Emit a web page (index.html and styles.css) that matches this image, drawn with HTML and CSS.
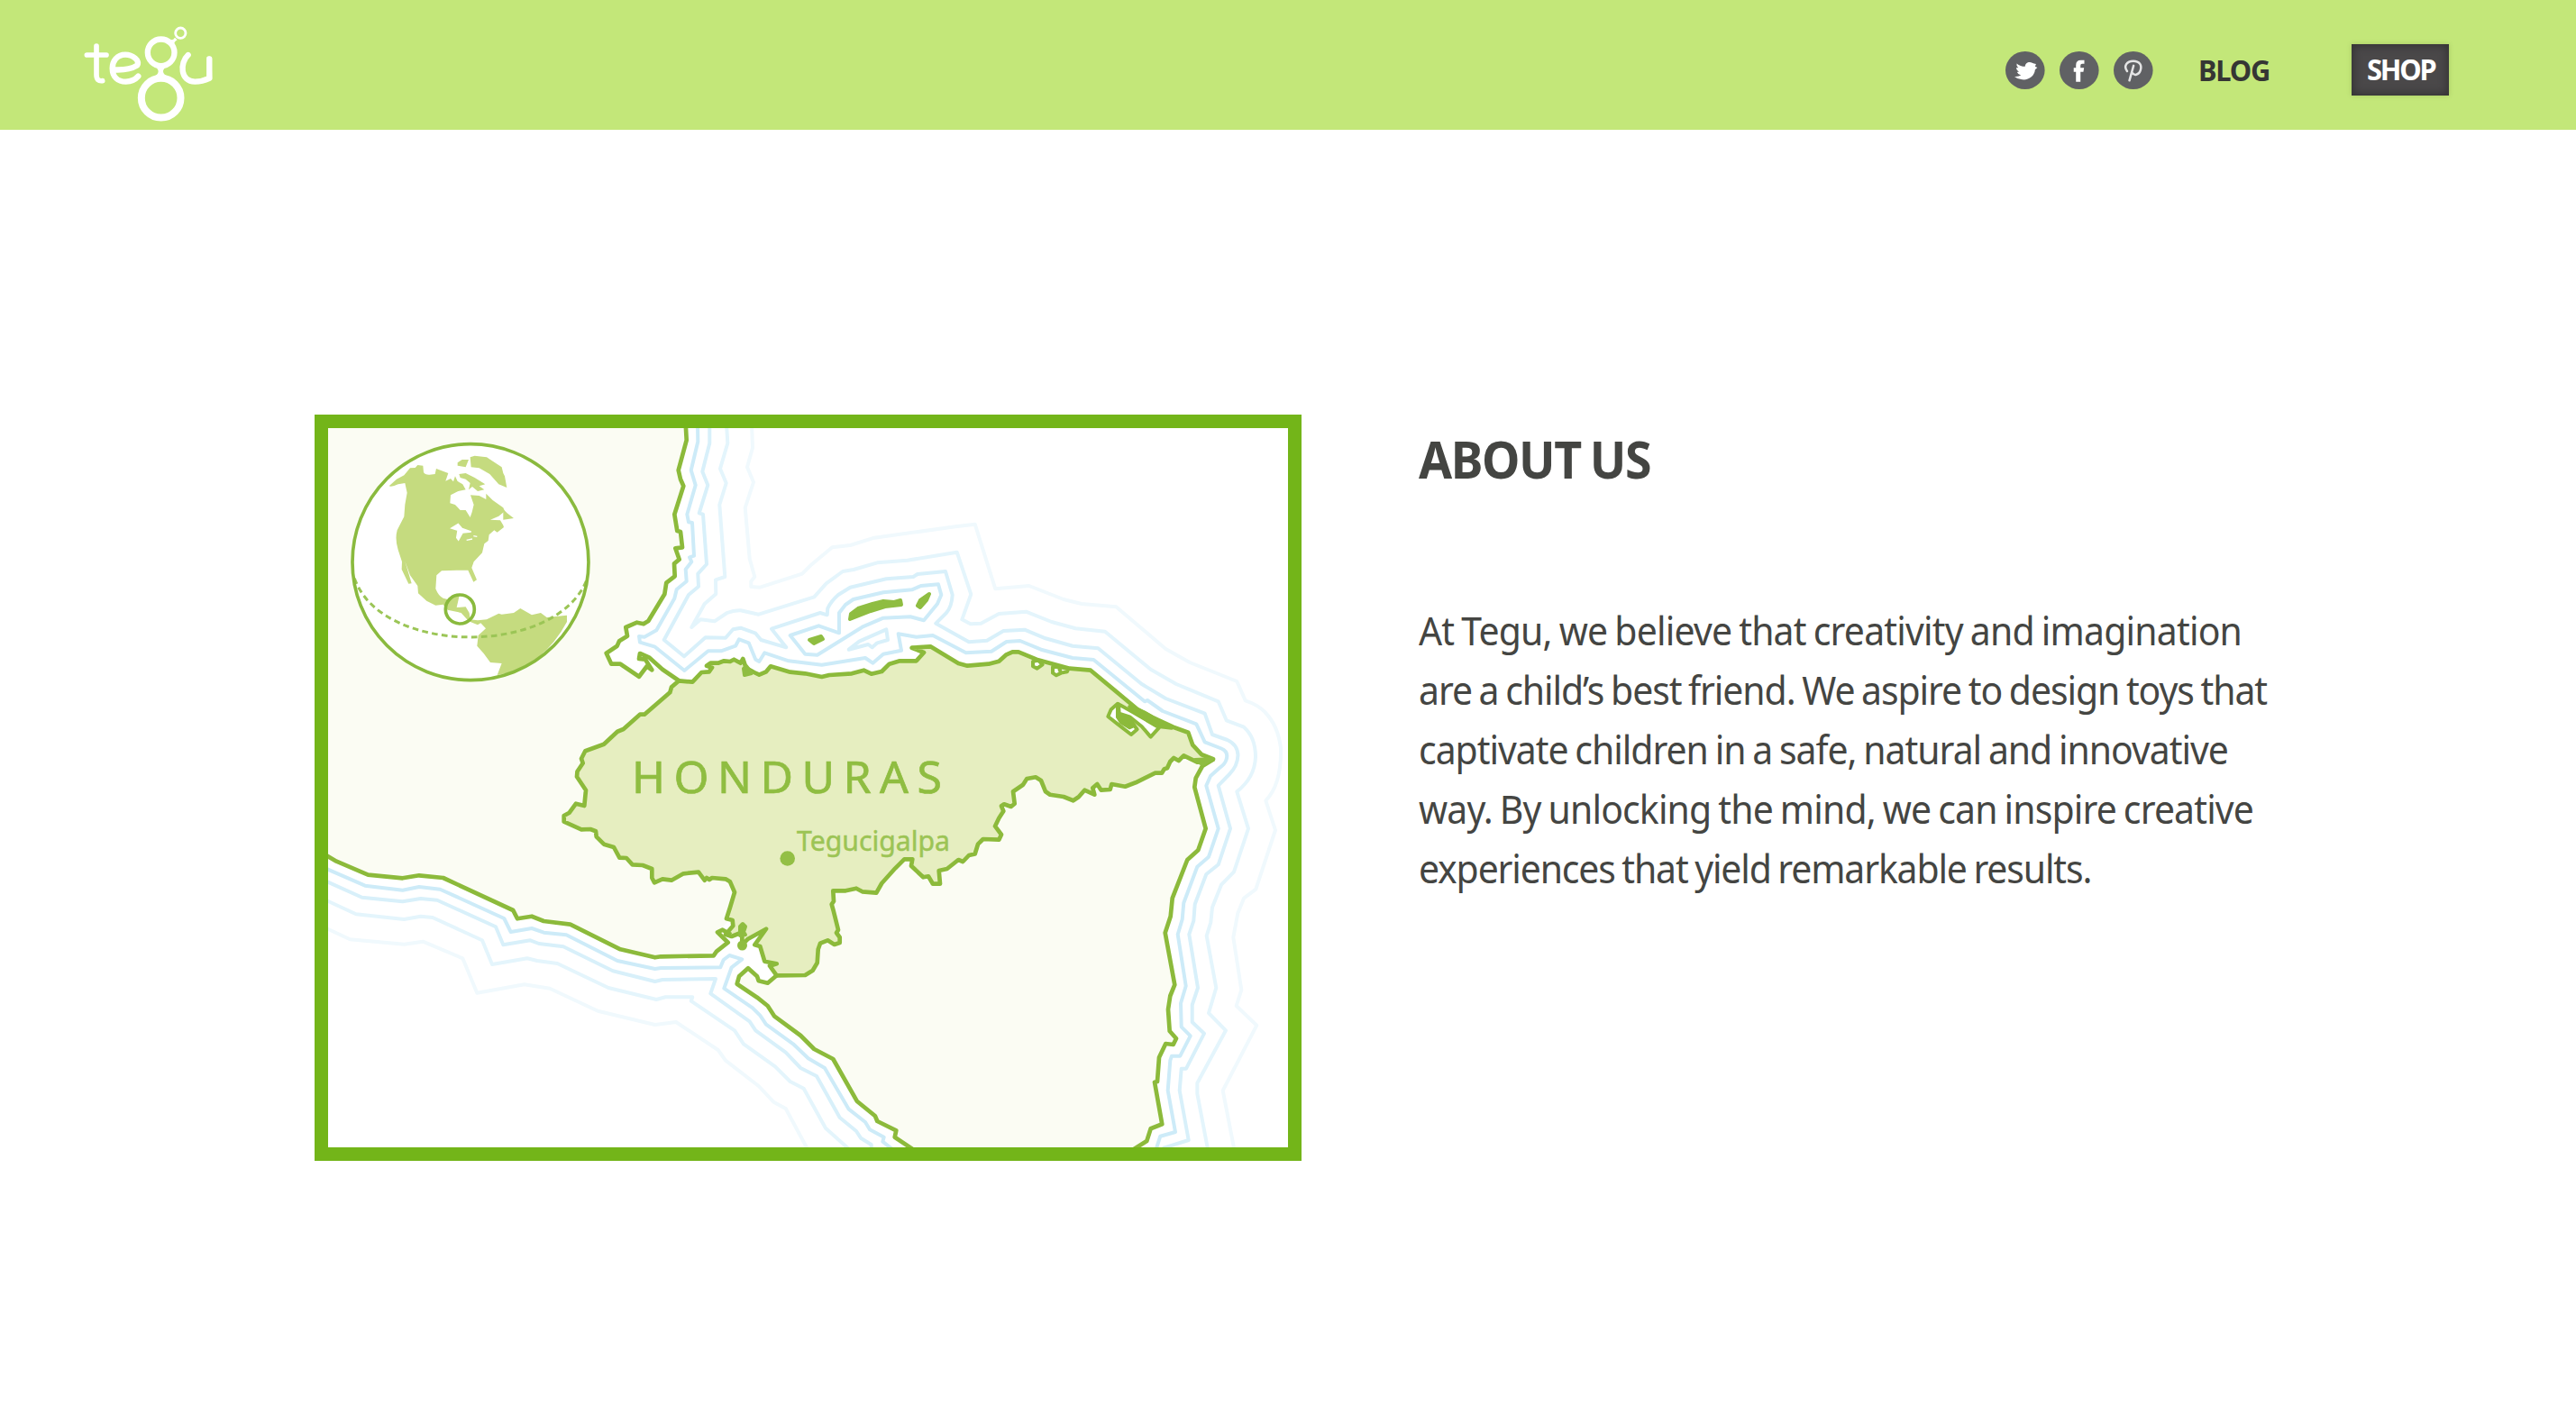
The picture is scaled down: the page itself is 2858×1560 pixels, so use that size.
FILE: index.html
```
<!DOCTYPE html>
<html lang="en">
<head>
<meta charset="utf-8">
<title>Tegu – About Us</title>
<link rel="stylesheet" href="styles.css">
</head>
<body>
<header class="topbar">
  <a class="logo" href="#" aria-label="tegu">
    <svg class="logo-mark" viewBox="100 85 435 325">
      <g class="logo-letters">
        <path d="M142 154V250Q142 273 162 270M110 184H175"/>
        <path d="M198 233Q250 236 277 219C289 203 262 183 238 183C210 183 195 205 195 228C195 257 213 273 240 273Q266 272 281 255"/>
        <path d="M447 184C419 210 420 273 470 273C492 273 505 268 518 262V197"/>
      </g>
      <path class="logo-fill" d="M338 222Q348 232 348 238Q348 247 336 255H377Q364 247 364 238Q364 232 374 222ZM383 132Q397 137 403 126L411 134Q401 139 401 147Z"/>
      <path class="logo-fill" d="M510 190Q520 186 525 193L527 266L510 272Z"/>
      <circle class="logo-ring" cx="357" cy="176" r="44.500"/>
      <circle class="logo-ring big" cx="357" cy="327" r="65.500"/>
      <circle class="logo-ring small" cx="422" cy="111" r="17"/>
    </svg>
  </a>
  <nav class="nav">
    <div class="social">
      <a href="#" aria-label="Twitter"><svg viewBox="70 110 122 122" preserveAspectRatio="none"><circle cx="131" cy="171" r="61"/><path class="glyph" d="M105 149Q116 159 131 159C131 147 143 142 153 147Q158 149 165 151L162 159L169 162L162 169C160 190 143 203 122 201Q108 200 98 191Q111 192 118 187Q108 183 106 177L112 175Q103 170 104 162L110 163Q103 157 105 149Z"/></svg></a>
      <a href="#" aria-label="Facebook"><svg viewBox="238 110 122 122" preserveAspectRatio="none"><circle cx="299" cy="171" r="61"/><path class="glyph" d="M289 208V176H282V163H289V154Q289 138 304 138H315V150H308Q303 150 303 156V163H314L312 176H303V208Z"/></svg></a>
      <a href="#" aria-label="Pinterest"><svg viewBox="406 110 122 122" preserveAspectRatio="none"><circle cx="467" cy="171" r="61"/><path class="outline" d="M448 174C436 157 447 141 467 141C487 141 495 155 489 172C484 187 469 189 464 179M468 156L455 204"/></svg></a>
    </div>
    <a class="blog" href="#"><span>BLOG</span></a>
    <a class="shop" href="#"><span>SHOP</span></a>
  </nav>
</header>

<main class="about">
  <figure class="map">
    <svg viewBox="364 475 1065 798">
      <!-- neighbouring land -->
      <g class="land">
        <path d="M364 470H760.700L761.700 488.300 752.700 521.700 755 531.700 758.300 539.300 748.300 570.700 751.300 589 755 590 757 607.300 749.300 608.300 753.700 620.700 748 625.300 748.700 639.300 739.300 646.700 737.300 659.300 719.300 689 714 692.300 706.700 690.700 694.300 696 696 705.700 687 711.300 684.700 716.700 672.700 724.700 678.300 736.700 688.300 736.700 709 750.700 717.700 739.300 735 742.700 753.300 755.300 753 950H364Z"/>
        <path d="M364 950.700L373.300 955.700 408.300 970.700 446.700 974.300 465 971.300 491.700 974 569.300 1010 574 1019.300 590 1016.700 603.300 1022 632.700 1025.700 688.300 1053.300 726.700 1062.300 733.300 1061.300 791.700 1060.300 795 1055.700 807.700 1045.700 796 1034.300 810 1020V960L753 900H364Z"/>
        <path d="M861.700 1082.300L851.700 1090.700 841.700 1088.300 840 1083.300 830 1074.300 820 1083.300 817.700 1091.700 840 1106.700 851.700 1116 859.300 1127.700 888.300 1149 903.300 1164 924.300 1175 950.700 1221.700 971 1238.300 973.300 1244 994.300 1254.300 992.700 1261.700 1011.700 1275H1150V900Z"/>
        <path d="M1346.700 842.300L1334 850 1326.700 863.300 1325.300 873.300 1337.700 919.300 1329.300 943.300 1317.300 954 1300.700 996.700 1298.700 1016.700 1292.700 1035 1303.300 1092.700 1298.300 1105 1296 1120 1297.700 1144 1305 1152.300 1301.700 1159 1293.300 1158 1286 1173.300 1284 1200 1281 1200.700 1289.300 1247.300 1276.700 1252.300 1272.300 1266 1260 1275H1011.700L900 1074V960L1040 900 1150 855Z"/>
      </g>

      <!-- depth lines, nearest the coast first -->
      <g class="depth d1">
        <path d="M774 470L774.300 490 766.700 521.700 771.700 538.300 762.300 570.700 764 579.300 768 580 770 616.700 765 618.300 767.300 623.300 760.700 631.700 761.700 645 750.700 654 748.300 664 728.300 699.300 715 706.700 709 706 710 712.700 726.700 717.700 759.300 744 785.700 722.300 800 722.300 816 716.700 820 709.300 830.700 713.300 838.300 731.700 842.300 734 848.300 724.300 875 733.300 911.700 737.700 960 730 968.300 735.700 980 725.700 1000 721.700 996.700 703.300 1016.700 706.700 1035 705 1071.700 724.300 1100 722.700 1116.700 712 1131.700 711 1155 720.700 1190 730 1213.300 732 1270 778.300 1273 777 1290 789 1327.300 803.300 1336.700 823.300 1355 830.500Q1363.500 834 1360.500 843 1359 848 1353 852L1343 861 1338.300 871.700 1351.700 919.300 1341 950.700 1328.300 961.700 1313.300 1001.700 1311.700 1020 1306.700 1036.700 1315.700 1094 1310 1113.300 1310.700 1139.300 1320.700 1149.300 1309.300 1171.700 1300 1171.700 1298.300 1176.700 1295.700 1210 1304 1256 1287.300 1260.700 1282.700 1275"/>
        <path d="M876.700 705L908.300 694.300 931 702.300V680L938 671 946.700 665 980 657.300 1011.700 654.300 1021.700 650 1041 648.300 1044.300 660 1040 670 1025 688.300 1010 684.300 980 685.700 956.700 695.700 906.700 726.700 893.300 725.700Z"/>
        <path d="M360 963L405 982.700 446.700 987.700 465 984 488.300 986.700 559.300 1019 566.700 1034 590 1030 603.300 1034.700 628.300 1037.300 685 1066 726.700 1075 733.300 1074 799.300 1073.300 802.700 1065 809.300 1060 823.300 1064.300 811.700 1073.300 803.300 1096.700 835 1118.300 843.300 1126.700 850 1136.700 880 1158.300 896.700 1174.300 915 1185 941.700 1230.700 960 1245 965 1253.300 980.700 1261.700 979.300 1266.700 990 1275"/>
      </g>
      <g class="depth d2">
        <path d="M787.300 470V491.700L779.300 523.300 785.300 538.300 775.700 569.300 780 570.700 784 626 774.300 636.700 775 650.700 764 660 736.700 710 759 728.300 782.700 707.300 805 707.700 813.300 698.300 821.700 696.700 838.300 702.700 844.300 710 872.300 718.300 856 697.700 910 680 917.700 682.300 918.300 675Q922 667 930 660L943.300 651.700 983.300 642.300 1013.300 640 1018 637 1049 634 1056.700 660Q1056 673 1050 680L1038.300 691.700 1075 712.300 1095 710.700 1113.300 700 1136.700 698.700 1160 708.300 1190 716.700 1218.300 719.300 1266.700 759 1293.300 775 1336.700 791.700 1345 815 1361.700 821Q1373 826 1373.500 838 1373 850 1364 859L1351.700 871.700 1365 919.300 1351.700 959.300 1338.300 970 1325.700 1003.300 1324.300 1021.700 1319.300 1036.700 1329 1096 1322.700 1115V1134L1336 1146.700 1316 1185.700H1310.700L1308.700 1210 1318.700 1265 1290 1274"/>
        <path d="M941.700 720.700L953.300 711.700 983.300 698.300 985 710 973.300 713.300 967.700 718.300 963.300 715Z"/>
        <path d="M360 977L401.700 995.700 446.700 1000.300 466.700 997 485 998.700 550 1028.300 558.300 1048.300 588.300 1043.300 598 1047 625 1050.300 680 1077.300 726.700 1089 735 1087 794 1086 788.300 1102.300 831.700 1133.300 838.300 1143.300 871.700 1167.700 888.300 1185 906 1194 931.700 1240 950 1255 955 1262.700 966.700 1270V1275"/>
      </g>
      <g class="depth d3">
        <path d="M806 470L807.300 491.700 799 520 805.700 536 798.300 560 804.300 640 794 643.300 794.300 659 781.700 670 767.300 696 777.300 687.300 792.700 689.300 806.700 680Q814 677 821.700 677.300L841.700 681.700 903.300 662.300 916.700 647.300 935 634 947 632 973.300 624.300 1006.700 621.700 1061.700 612.700 1077.300 659.300 1067.300 687.300 1076.700 692.300 1088.300 691.700 1108.300 681 1138.300 678.700 1166.700 690 1193.300 697.300 1226 700.700 1276.700 742.700 1305 759 1351.700 778.300 1360.700 799.300 1380 806.700Q1393 818 1393 840 1392 863 1372.300 878.300L1385 919.300 1369 967.300 1355 981.700 1345 1006.700 1343.300 1023.300 1338.700 1038.300 1349.300 1096 1341 1124 1360 1143.300 1328.300 1201.700V1213.300L1340 1275"/>
        <path d="M360 998L395 1014.300 448.300 1020 466.700 1016.700 480 1018 535 1043.300 546 1070 585 1063.300 596 1066 618.300 1069 675 1096 728.300 1109 738.300 1106.300H768.300L766.700 1110.700 815 1143.300 825 1158.300 860 1183.300 876.700 1200 891.700 1207.700 916 1251.700 942 1275"/>
      </g>
      <g class="depth d4">
        <path d="M834 470L835 496.700 829 518.300 836 535 826.700 563.300 831.700 620 837.300 640 833.300 645V651L843.300 651.700 890 636.700 900 626.700 923.300 607.300 943.300 605 970 596.700 1060 584.300 1081.700 581.700 1104.300 653.300 1141.700 650 1180 665 1200 670 1238.300 673.300 1293.300 720 1320 735 1372.300 756 1381.700 777.300Q1396 782 1403.300 790 1418 805 1421 830 1422 870 1404.300 888.300L1415 921 1393.300 986.700 1380 996.700 1373.300 1013.300 1368.300 1040 1377.300 1098.300 1371.700 1116 1394.300 1137.700 1356.700 1210 1369.300 1275"/>
        <path d="M360 1029L388.300 1042.300 448.300 1047.700 469.300 1044.700 513.300 1063.300 529.300 1101.700 581.700 1092.300 610 1096.700 663.300 1121.700 726.700 1137 750 1134 796.700 1165 805 1176.700 841.700 1205 858.300 1222.700 871.700 1230 896 1275"/>
      </g>

      <!-- Honduras -->
      <path class="honduras" d="M753.300 755.300L768.300 756.700 778.300 746 786.700 745.300 790 740.700 784 738.700 788.300 735.700 796.700 735.700 803.300 733.300 810 734 814.300 731.700 821.700 735.700 824.300 731 827.700 741 836.700 746 842.300 748.700 850 745.300 855 739.300 876.700 745.700 893.300 747.300 911.700 751 920 749 945 747.300 958.300 743.700 966.700 747.700 978.300 745 986.700 736.700 998.300 733.300 1016.700 733.300 1025 724 1011.700 718.700 1032.300 717.300 1063.300 736 1073.300 738.700 1096.700 736.700 1108.300 733.700 1116 726.700 1123.300 723.300H1130L1150 731.700 1186.700 741.700 1210 743.700 1261.700 786.700 1280 796.700 1301.700 806.700 1318.300 812.700 1323.300 826.700 1333.300 837.300 1346 842.300 1336.700 845.700H1328.300L1313.300 838.300 1307.700 844 1302.300 841 1298.300 845 1295 852.300 1291.700 853.300 1289 857.700H1281.700L1260 868.300 1248.300 872.700 1233.300 870 1231.700 876 1221.700 876.700 1217.300 870 1212.300 874.300 1214.300 881.700 1203.300 876.700 1196.700 884.300 1190.700 888.300 1180 884 1165 881.700 1160 878.300 1155 866 1149 862.300 1139.300 864 1135 870.700 1124 878.300 1125.700 891.700 1121.700 895 1114 892.300 1111 894.300 1113.300 900 1108.300 907.700 1104 916.700 1111 926 1108.300 931.700 1090.700 931 1085 936.700 1081.700 947.500 1075 949 1068.300 956 1063.300 954 1050.700 964 1041.700 966 1043 980.700H1035L1030 972.300 1024.300 973.300 1011 960.700 1012.300 953.300H1003.300L993.300 963.300 978.300 980 972.300 990.700 956.700 989.300 950 985.700 938.300 988.300H924.300L925 1000 922.700 1003.300 925 1011.700 930 1031.700 928 1035 931.700 1040V1046L925.700 1048 918.300 1043.300 910 1046.700 907.700 1053.300 906.700 1068.300 901.700 1076.700 893.300 1082 861.700 1082.300 854 1071.700 861.700 1069.300 848.300 1066.700 843.300 1050 837.300 1048.300 850 1030.700 830 1041.700 823.300 1048.300 V1026.700L821.700 1035 811.700 1039 805 1036.700 813.300 1027.300 812.700 1021 806 1019.300 810 1006.700 815 990 810 978.300 805 975.300 790 974 787 976 784 974 781.700 976.700 775 967.700 758.300 969.300 745 976.700 735 975.300 726 979.300 723.300 974V964L713 960 701.700 959.300 695 952 687.300 951.700 681 940 670 936.700 661.700 928.300 661 922.300 655 920 645 920.300 625.700 911.700V905L631.700 901.700 639 891.700 648.300 894 650 876.700 640 861.700 640.500 856 646.700 846.700 645 841.700 649.300 833.300 670 825.700 685 811.700 691.700 809 710 792.700 715 792.700 743.300 768.300 745 762.300Z"/>

      <!-- coastlines of the neighbours -->
      <g class="coast">
        <path d="M760.700 470L761.700 488.300 752.700 521.700 755 531.700 758.300 539.300 748.300 570.700 751.300 589 755 590 757 607.300 749.300 608.300 753.700 620.700 748 625.300 748.700 639.300 739.300 646.700 737.300 659.300 719.300 689 714 692.300 706.700 690.700 694.300 696 696 705.700 687 711.300 684.700 716.700 672.700 724.700 678.300 736.700 688.300 736.700 709 750.700 717.700 739.300 723.300 743.300 716 731.700 709 731 710 725 720 729.300 735 742.700 753.300 755.300"/>
        <path d="M360 948L373.300 955.700 408.300 970.700 446.700 974.300 465 971.300 491.700 974 569.300 1010 574 1019.300 590 1016.700 603.300 1022 632.700 1025.700 688.300 1053.300 726.700 1062.300 733.300 1061.300 791.700 1060.300 795 1055.700 807.700 1045.700 796 1034.300 801.700 1031.700 811 1037"/>
        <path d="M861.700 1082.300L851.700 1090.700 841.700 1088.300 840 1083.300 830 1074.300 820 1083.300 817.700 1091.700 840 1106.700 851.700 1116 859.300 1127.700 888.300 1149 903.300 1164 924.300 1175 950.700 1221.700 971 1238.300 973.300 1244 994.300 1254.300 992.700 1261.700 1014 1276"/>
        <path d="M1346.700 842.300L1334 850 1326.700 863.300 1325.300 873.300 1337.700 919.300 1329.300 943.300 1317.300 954 1300.700 996.700 1298.700 1016.700 1292.700 1035 1303.300 1092.700 1298.300 1105 1296 1120 1297.700 1144 1305 1152.300 1301.700 1159 1293.300 1158 1286 1173.300 1284 1200 1281 1200.700 1289.300 1247.300 1276.700 1252.300 1272.300 1266 1258 1275"/>
      </g>

      <!-- islands and bays -->
      <g class="spots">
        <path d="M943 687L944 681 952 675 968 670 980 667 992 668 999 666 1000 671 982 673 966 678Z"/>
        <path d="M1018 672L1021 666 1031 659 1028 666 1021 674Z"/>
        <path d="M898 710L911 706 913 709 903 714Z"/>
        <path d="M825 742L828 739 834 747 826 749Z"/>
        <path d="M821 1028L824 1025 827 1028 825 1034 827 1037 821 1038Z"/>
        <circle cx="823.500" cy="1049" r="3.500"/>
        <path d="M1326 843L1345 842 1334 848Z"/>
      </g>
      <g class="lagoon" transform="translate(1040 560) scale(.3333)">
        <path d="M600 662L578 682 568 705 600 730 645 765 665 748 640 715 600 705Z"/>
        <path class="bar" d="M600 706L632 712 655 735 640 742 612 725Z"/>
        <path d="M603 664L650 690 738 742 710 773 680 738 640 706 605 695Z"/>
        <path class="bar" d="M640 672L690 692 780 743 735 738 665 697Z"/>
        <path d="M318 522V538L332 545 350 532 335 518ZM384 540V560L396 568 412 560 432 556 436 546 405 540ZM405 545L412 560"/>
      </g>

      <!-- globe inset -->
      <g transform="translate(340 450) scale(.3333)">
        <circle class="sea" cx="546" cy="521" r="393"/>
        <path class="continent" d="M275 268L300 245 325 232 345 208 362 207 370 198 388 200 390 222Q395 231 410 230L428 228 432 210 472 225 463 251 480 243 489 253 495 235 503 252 520 262 530 280 505 285 480 298 478 325 495 330 512 348 530 348 545 372 551 355 557 330 546 298 575 300 598 312 598 293 620 315 655 340 660 352 640 368 612 380 645 382 655 398 657 405 635 422 625 415 608 430 605 450 592 460 585 490 557 520 550 540 567 580 556 587 538 548 500 548 450 550 433 565 430 610Q440 635 455 641L470 645 485 630 510 628 505 650 500 672 530 670 542 690 545 712 570 715 600 712 640 692 650 695 690 690 712 675 750 697 780 690 800 705 867 698V720Q830 790 770 840 700 888 635 897L650 858 612 855 590 825 568 800 572 765 597 742 580 724 570 730 540 718 515 690 470 680 455 662 430 665 400 650 372 625 370 600 345 565 328 518 350 592 340 593 317 545 318 520 305 480Q294 445 302 415L325 370 328 330 335 290 328 258 305 262Q285 272 275 268Z"/>
        <path class="continent" d="M545 172L560 167 600 172 650 205 655 225 660 235 667 273 640 262 610 228 575 208 548 205ZM503 190L518 180 540 180 530 205 503 200ZM508 228L530 225 560 240 595 262 575 268 592 280 570 285 552 270 540 280 545 258 530 245 512 240ZM655 345L668 358 690 375 655 380Z"/>
        <path class="lakes" d="M482 408L505 394 518 409 548 420 520 423 506 448 500 440 504 415ZM533 448L552 444M556 434L568 436"/>
        <path class="equator" d="M160 575C250 836 840 836 935 575"/>
        <circle class="globe-line" cx="511" cy="678" r="48"/>
        <circle class="globe-line" cx="546" cy="521" r="393"/>
      </g>

      <text class="country" x="701" y="880" textLength="344" lengthAdjust="spacing">HONDURAS</text>
      <circle class="dot" cx="873.700" cy="952.500" r="8.300"/>
      <text class="city" x="884" y="944" textLength="170" lengthAdjust="spacingAndGlyphs">Tegucigalpa</text>
    </svg>
  </figure>

  <section class="copy">
    <h1>ABOUT US</h1>
    <p>
      <span class="line a">At Tegu, we believe that creativity and imagination</span>
      <span class="line b">are a child’s best friend. We aspire to design toys that</span>
      <span class="line c">captivate children in a safe, natural and innovative</span>
      <span class="line d">way. By unlocking the mind, we can inspire creative</span>
      <span class="line e">experiences that yield remarkable results.</span>
    </p>
  </section>
</main>
</body>
</html>
```
FILE: styles.css
```
* { box-sizing: border-box; }

body {
  margin: 0;
  background: #fff;
  color: #444542;
  font-family: "Noto Sans", "Open Sans", sans-serif;
}

a { color: inherit; text-decoration: none; }
svg { display: block; }

/* Header */
.topbar {
  display: flex;
  justify-content: space-between;
  align-items: flex-start;
  height: 144px;
  padding: 28px 141px 0 93px;
  background: #c3e779;
}

.logo-mark { width: 145px; height: 108.300px; }
.logo-letters path { fill: none; stroke: #fff; stroke-width: 19; stroke-linecap: round; stroke-linejoin: round; }
.logo-letters path:first-child { stroke-width: 17; }
.logo-fill { fill: #fff; }
.logo-ring { fill: none; stroke: #fff; stroke-width: 19; }
.logo-ring.big { stroke-width: 24; }
.logo-ring.small { stroke-width: 8.500; }

.nav { display: flex; align-items: center; height: 57px; margin-top: 21px; }
.social { display: flex; gap: 16.400px; }
.social svg { width: 43.600px; height: 42px; fill: #606164; }
.social .glyph { fill: #fff; }
.social .outline { fill: none; stroke: #e4e4e5; stroke-width: 7; stroke-linecap: round; }

.blog, .shop { font-size: 31.500px; line-height: 56px; font-weight: 700; }
.blog { width: 78px; margin-left: 50px; color: #353634; letter-spacing: -1.200px; }
.blog span, .shop span { display: block; transform: scaleX(.98); transform-origin: 0 50%; }
.shop {
  width: 108px;
  height: 57px;
  margin-left: 92.400px;
  padding-left: 17px;
  color: #fff;
  letter-spacing: -2.200px;
  background: #4a4849;
  box-shadow: inset 0 0 10px 2px #353334, 0 0 5px rgba(90, 110, 40, .25);
}

/* About */
.about { display: flex; align-items: flex-start; padding: 316px 0 0 349px; }

.map { width: 1095px; height: 828px; margin: 0; border: 15px solid #73b519; flex: none; }
.map svg { width: 1065px; height: 798px; }

.land { fill: #fbfcf3; }
.depth { fill: none; stroke-width: 4; stroke-linejoin: round; }
.d1 { stroke: #cdebf8; }
.d2 { stroke: #d8f0fa; }
.d3 { stroke: #e4f5fc; }
.d4 { stroke: #f0f9fd; }
.honduras { fill: #e6eec0; stroke: #8cba3b; stroke-width: 4.700; stroke-linejoin: round; }
.coast { fill: none; stroke: #8cba3b; stroke-width: 4.700; stroke-linejoin: round; }
.spots { fill: #8fbd41; stroke: #8fbd41; stroke-width: 4; stroke-linejoin: round; }
.lagoon path { fill: #fff; stroke: #8cba3b; stroke-width: 12; stroke-linejoin: round; }
.lagoon .bar { fill: #8cba3b; }

.sea { fill: #fff; }
.continent { fill: #c5db7f; }
.lakes { fill: #fff; stroke: #fff; stroke-width: 4; }
.globe-line { fill: none; stroke: #8aba3e; stroke-width: 11; }
.equator { fill: none; stroke: #9bc556; stroke-width: 9; stroke-dasharray: 20 13; }

.country { fill: #8fbd41; stroke: #8fbd41; stroke-width: .700px; font-size: 50px; }
.city { fill: #9cc455; stroke: #9cc455; stroke-width: .500px; font-size: 31.500px; }
.dot { fill: #93bf45; }

.copy { margin: 12px 0 0 130px; }

h1 {
  margin: 0 0 118px;
  font-size: 56.500px;
  line-height: 76px;
  font-weight: 700;
  letter-spacing: -1.500px;
  word-spacing: -2.500px;
  white-space: nowrap;
  transform: scaleX(.95);
  transform-origin: 0 50%;
}

p { margin: 0; font-size: 44px; line-height: 66px; word-spacing: -2px; }
.line { display: block; white-space: nowrap; transform: scaleX(.93); transform-origin: 0 50%; }
.a { letter-spacing: -.860px; }
.b { letter-spacing: -1.160px; }
.c { letter-spacing: -1.090px; }
.d { letter-spacing: -.910px; }
.e { letter-spacing: -1.230px; }
```
